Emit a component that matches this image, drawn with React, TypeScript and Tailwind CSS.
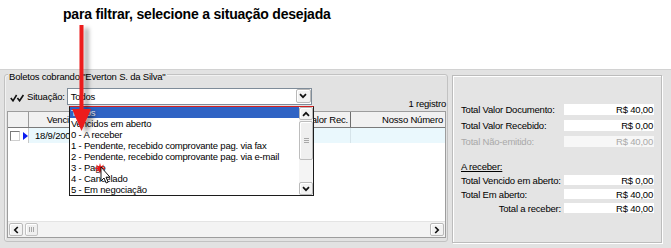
import React from "react";

const small = "text-[9.5px] leading-[11px] tracking-[-0.2px]";

function Chev({ dir }: { dir: "down" | "up" | "left" | "right" }) {
  if (dir === "down")
    return (
      <svg width="8" height="6" viewBox="0 0 8 6">
        <path d="M1 1.2 L4 4.2 L7 1.2" fill="none" stroke="#111" strokeWidth="1.7" />
      </svg>
    );
  if (dir === "up")
    return (
      <svg width="8" height="6" viewBox="0 0 8 6">
        <path d="M1 4.8 L4 1.8 L7 4.8" fill="none" stroke="#111" strokeWidth="1.7" />
      </svg>
    );
  if (dir === "left")
    return (
      <svg width="6" height="8" viewBox="0 0 6 8">
        <path d="M4.8 1 L1.8 4 L4.8 7" fill="none" stroke="#111" strokeWidth="1.7" />
      </svg>
    );
  return (
    <svg width="6" height="8" viewBox="0 0 6 8">
      <path d="M1.2 1 L4.2 4 L1.2 7" fill="none" stroke="#111" strokeWidth="1.7" />
    </svg>
  );
}

function SBtn({ dir, cls }: { dir: "down" | "up" | "left" | "right"; cls: string }) {
  return (
    <div
      className={`${cls} flex items-center justify-center bg-[#f2f2f2] border border-[#b9b9b9] rounded-[2px] shadow-[inset_1px_1px_0_#ffffff]`}
    >
      <Chev dir={dir} />
    </div>
  );
}

function Grip({ vertical }: { vertical: boolean }) {
  return vertical ? (
    <div className="flex flex-col gap-[1px]">
      <div className="w-[5px] h-[1px] bg-[#a8a8a8]" />
      <div className="w-[5px] h-[1px] bg-[#a8a8a8]" />
      <div className="w-[5px] h-[1px] bg-[#a8a8a8]" />
    </div>
  ) : (
    <div className="flex gap-[1px]">
      <div className="w-[1px] h-[5px] bg-[#a8a8a8]" />
      <div className="w-[1px] h-[5px] bg-[#a8a8a8]" />
      <div className="w-[1px] h-[5px] bg-[#a8a8a8]" />
    </div>
  );
}

function ValRow({
  label,
  value,
  disabled,
  h,
  alignRight,
}: {
  label: string;
  value: string;
  disabled?: boolean;
  h: string;
  alignRight?: boolean;
}) {
  return (
    <div className={`flex items-center ${h} ${alignRight ? "justify-end gap-[3px]" : "justify-between"}`}>
      <span className={`${small} whitespace-nowrap ${disabled ? "text-[#a9a9a9]" : "text-black"}`}>{label}</span>
      <div
        className={`w-[90px] ${h} flex items-center justify-end pr-[1px] ${small} ${
          disabled ? "text-[#a9a9a9] bg-[#f7f7f7]" : "text-black bg-white"
        }`}
      >
        {value}
      </div>
    </div>
  );
}

const items = [
  "Todos",
  "Vencidos em aberto",
  "0 - A receber",
  "1 - Pendente, recebido comprovante pag. via fax",
  "2 - Pendente, recebido comprovante pag. via e-mail",
  "3 - Pago",
  "4 - Cancelado",
  "5 - Em negociação",
];

export default function App() {
  return (
    <div className="relative w-[671px] h-[248px] overflow-hidden bg-white text-black font-['Liberation_Sans',Arial,sans-serif]">
      {/* title */}
      <div className="h-[69px] pl-[63px] pt-[6px]">
        <div className="text-[14px] leading-[16px] font-bold tracking-[-0.2px] whitespace-nowrap">
          para filtrar, selecione a situação desejada
        </div>
      </div>

      {/* panel */}
      <div className="flex items-start h-[179px] bg-[#e2e2e2] border-t border-[#d2d2d2] pl-[4px] pt-[4px]">
        {/* group box */}
        <div className="relative w-[444px] h-[168px] border border-[#c2c2c2] rounded-[3px] shadow-[inset_1px_1px_0_#f2f2f2] flex flex-col pt-[13px]">
          <div className={`absolute left-[3px] top-[-4px] px-[1px] bg-[#e2e2e2] whitespace-nowrap ${small}`}>
            Boletos cobrando "Everton S. da Silva"
          </div>

          {/* situação row */}
          <div className="flex h-[23px] pl-[5px] pr-[1px]">
            <div className="flex items-center h-[17px]">
              <svg width="15" height="8" viewBox="0 0 15 8" className="mt-[2px]">
                <path d="M0.8 4 L3 6.8 L6.6 1" fill="none" stroke="#111" strokeWidth="1.6" />
                <path d="M7.4 4 L9.6 6.8 L13.4 1" fill="none" stroke="#111" strokeWidth="1.6" />
              </svg>
              <span className={`ml-[2px] ${small}`}>Situação:</span>
              <div className="ml-[2px] w-[245px] h-[17px] border border-[#7f8c99] bg-white flex items-start">
                <span className={`flex-1 pl-[3px] pt-[2px] ${small}`}>Todos</span>
                <SBtn dir="down" cls="w-[15px] h-[14px]" />
              </div>
            </div>
            <div className="flex-1" />
            <span className={`mt-[10px] whitespace-nowrap ${small}`}>1 registro</span>
          </div>

          {/* grid */}
          <div className="ml-[2px] w-[439px] h-[127px] border border-[#9d9d9d] bg-white flex flex-col">
            <div className={`flex h-[16px] border-b border-[#7a7a7a] bg-[#f1f1f1] ${small}`}>
              <div className="w-[21px] border-r border-[#9a9a9a]" />
              <div className="w-[84px] border-r border-[#9a9a9a] flex items-center justify-center">Vencimento</div>
              <div className="w-[90px] border-r border-[#9a9a9a]" />
              <div className="w-[74px] border-r border-[#9a9a9a]" />
              <div className="w-[74px] border-r border-[#6e6e6e] flex items-center justify-end pr-[2px]">Valor Rec.</div>
              <div className="flex-1 flex items-center justify-end pr-[2px]">Nosso Número</div>
            </div>
            <div className={`flex h-[15px] ${small}`}>
              <div className="w-[21px] flex items-center bg-white border-r border-[#c8c8c8]">
                <div className="ml-[2px] w-[10px] h-[10px] bg-white border border-[#7a7a7a] border-r-[#cfcfcf] border-b-[#cfcfcf]" />
                <svg width="5" height="8" viewBox="0 0 5 8" className="ml-[3px]">
                  <path d="M0 0 L5 4 L0 8 Z" fill="#0a1cf0" />
                </svg>
              </div>
              <div className="flex-1 flex bg-[#eaf8fd]">
                <div className="w-[84px] flex items-center pl-[6px]">18/9/2009</div>
                <div className="w-[90px]" />
                <div className="w-[74px]" />
                <div className="w-[74px] border-r border-[#d6e4ea]" />
                <div className="flex-1" />
              </div>
            </div>
            <div className="flex-1" />
            <div className="flex items-center h-[16px] bg-[#f3f3f3] border-t border-[#e4e4e4] px-[1px]">
              <SBtn dir="left" cls="w-[14px] h-[13px]" />
              <div className="ml-[2px] w-[13px] h-[13px] bg-[#efefef] border border-[#c2c2c2] rounded-[2px] shadow-[inset_1px_1px_0_#ffffff] flex items-center justify-center">
                <Grip vertical={false} />
              </div>
              <div className="flex-1" />
              <SBtn dir="right" cls="w-[14px] h-[13px]" />
            </div>
          </div>
        </div>

        {/* right totals panel */}
        <div className="ml-[4px] mt-[1px] w-[210px] h-[168px] border border-[#bcbcbc] shadow-[inset_1px_1px_0_#ffffff,1px_1px_0_#ffffff] bg-[#e4e4e4] flex flex-col pl-[8px] pr-[7px] pt-[28px]">
          <div className="flex flex-col gap-[5px]">
            <ValRow label="Total Valor Documento:" value="R$ 40,00" h="h-[11px]" />
            <ValRow label="Total Valor Recebido:" value="R$ 0,00" h="h-[11px]" />
            <ValRow label="Total Não-emitido:" value="R$ 40,00" h="h-[11px]" disabled />
          </div>
          <div className={`mt-[14px] h-[11px] underline ${small}`}>A receber:</div>
          <div className="mt-[3px] flex flex-col gap-[4px]">
            <ValRow label="Total Vencido em aberto:" value="R$ 0,00" h="h-[10px]" />
            <ValRow label="Total Em aberto:" value="R$ 40,00" h="h-[10px]" />
            <ValRow label="Total a receber:" value="R$ 40,00" h="h-[10px]" alignRight />
          </div>
        </div>
      </div>

      {/* dropdown list (overlay) */}
      <div className="absolute left-[69px] top-[106px] w-[245px] h-[90px] bg-white border border-[#1c1c1c] border-t-[#d42020] flex">
        <div className="flex-1 flex flex-col">
          {items.map((t, i) => (
            <div
              key={t}
              className={`h-[11px] pl-[1px] whitespace-nowrap ${small} ${
                i === 0 ? "bg-[#2f63c4] text-white" : "text-black"
              }`}
            >
              {t}
            </div>
          ))}
        </div>
        <div className="w-[14px] flex flex-col bg-[#f4f4f4]">
          <SBtn dir="up" cls="w-[14px] h-[13px]" />
          <div className="mt-[1px] w-[14px] h-[39px] bg-[#efefef] border border-[#bdbdbd] rounded-[2px] shadow-[inset_1px_1px_0_#ffffff] flex items-center justify-center">
            <Grip vertical />
          </div>
          <div className="flex-1" />
          <SBtn dir="down" cls="w-[14px] h-[13px]" />
        </div>
      </div>

      {/* red arrow annotation */}
      <svg className="absolute left-0 top-0 pointer-events-none" width="671" height="248">
        <defs>
          <filter id="sh" x="-100%" y="-10%" width="400%" height="130%">
            <feDropShadow dx="5" dy="3" stdDeviation="2" floodColor="#000000" floodOpacity="0.35" />
          </filter>
        </defs>
        <g filter="url(#sh)">
          <rect x="79.5" y="25" width="4" height="85" fill="#ec1c1c" />
          <polygon points="72,109 91,109 81.5,131" fill="#ec1c1c" />
        </g>
      </svg>

      {/* mouse cursor with red click mark */}
      <svg className="absolute left-[92px] top-[160px] pointer-events-none" width="22" height="28" viewBox="0 0 22 28">
        <polygon
          points="8,3 9,6.5 12,4.5 10.5,7.5 14,8 10.5,9.5 12.5,12 9,10.5 8,14 7,10.5 3.5,12 5.5,9.5 2,8 5.5,7.5 4,4.5 7,6.5"
          fill="#e51b1b"
        />
        <path
          d="M9 7 L9 21 L12 18 L14.2 23 L16.2 22.1 L14 17.2 L18 17.2 Z"
          fill="#ffffff"
          stroke="#000000"
          strokeWidth="0.9"
          strokeLinejoin="round"
        />
      </svg>
    </div>
  );
}
